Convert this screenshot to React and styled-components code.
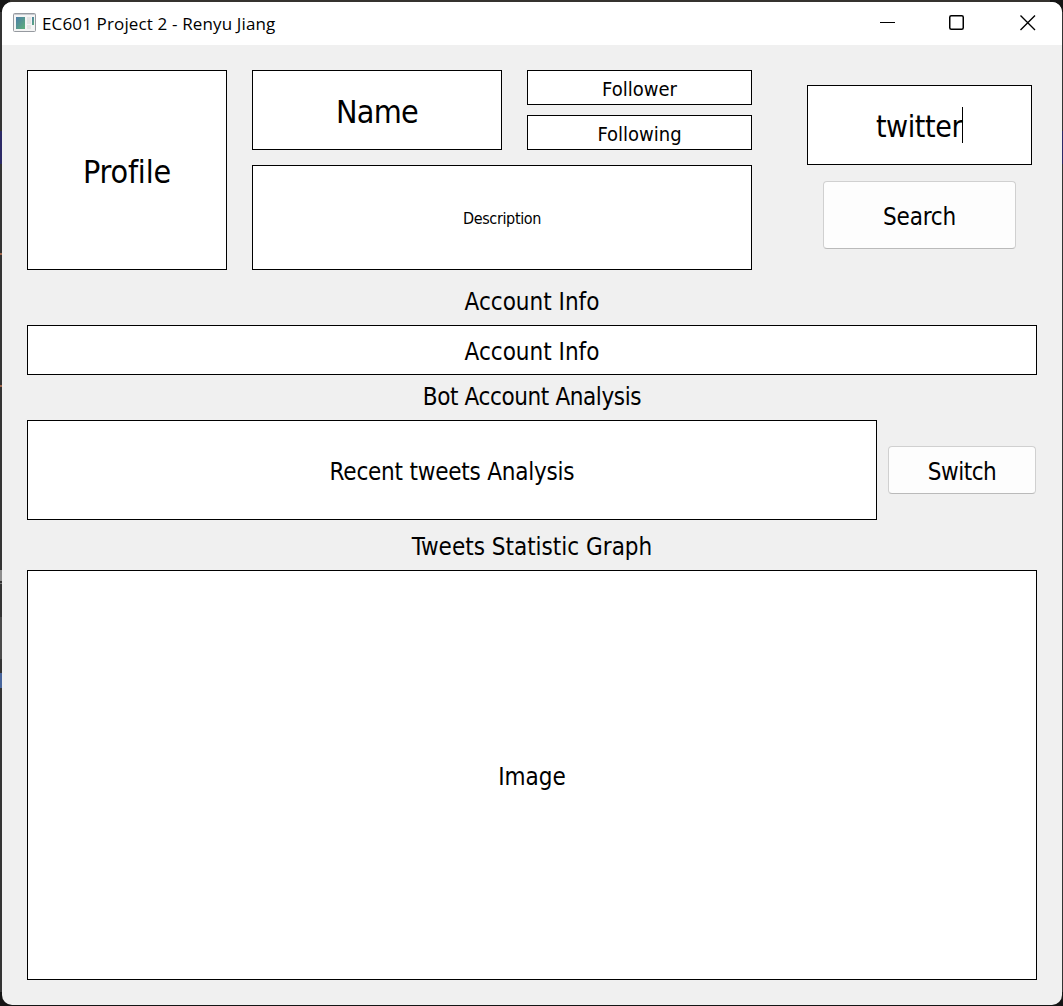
import React from "react";
import styled, { createGlobalStyle } from "styled-components";

const GlobalStyle = createGlobalStyle`
  *, *::before, *::after { box-sizing: border-box; }
  body { margin: 0; background: #262626; }
`;

const Desktop = styled.div`
  width: 1063px;
  height: 1006px;
  padding: 2px 1px 1px 2px;
  overflow: hidden;
  background:
    linear-gradient(#35322f, #35322f) 10px 0 / 1040px 2px no-repeat,
    linear-gradient(#2c2a66, #2c2a66) 0 131px / 1063px 33px no-repeat,
    linear-gradient(#a0674c, #a0674c) 0 253px / 2px 2px no-repeat,
    linear-gradient(#a0674c, #a0674c) 0 385px / 2px 2px no-repeat,
    linear-gradient(#8c8c8c, #8c8c8c) 0 570px / 2px 11px no-repeat,
    linear-gradient(#777, #777) 0 583px / 2px 1px no-repeat,
    linear-gradient(#4b4b4b, #4b4b4b) 0 617px / 2px 42px no-repeat,
    linear-gradient(#48659c, #48659c) 0 673px / 2px 15px no-repeat,
    linear-gradient(#343434, #343434) 0 12px / 1063px 980px no-repeat,
    #151515;
`;

const Window = styled.main`
  display: flex;
  flex-direction: column;
  width: 1060px;
  height: 1003px;
  border-radius: 10px;
  overflow: hidden;
  background: #f0f0f0;
  color: #000;
  font-family: "DejaVu Sans Condensed", "DejaVu Sans", sans-serif;
  font-stretch: condensed;
  font-variant-ligatures: none;
`;

const TitleBar = styled.header`
  display: flex;
  align-items: center;
  flex: none;
  height: 43px;
  padding-left: 11px;
  background: #fff;
`;

const Title = styled.h1`
  flex: 1;
  margin: 0 0 0 6px;
  padding-top: 1px;
  font: 400 17px/24px "Open Sans", "Noto Sans", sans-serif;
  letter-spacing: ${(p) => p.$spacing}px;
`;

const AppIcon = styled.svg`
  display: block;
  margin-top: -3px;
`;

const Controls = styled.div`
  display: flex;
`;

const ControlButton = styled.button`
  display: grid;
  place-items: center;
  width: 70px;
  height: 43px;
  padding: 0 0 2px ${(p) => p.$shift || 0}px;
  border: 0;
  background: transparent;
`;

const Client = styled.div`
  display: flex;
  flex-direction: column;
  padding: 25px 25px 0;
`;

const Header = styled.section`
  display: flex;
  height: 200px;
`;

const Details = styled.div`
  display: flex;
  flex-direction: column;
  gap: 15px;
  margin-left: 25px;
`;

const DetailsTop = styled.div`
  display: flex;
  gap: 25px;
`;

const Counts = styled.div`
  display: flex;
  flex-direction: column;
  gap: 10px;
`;

const SearchPanel = styled.form`
  display: flex;
  flex-direction: column;
  align-items: center;
  gap: 16px;
  margin-left: 55px;
  padding-top: 15px;
`;

const Box = styled.div`
  display: flex;
  align-items: center;
  justify-content: center;
  flex: none;
  width: ${(p) => p.$w}px;
  height: ${(p) => p.$h}px;
  padding-top: ${(p) => p.$drop || 0}px;
  border: 1px solid #000;
  background: #fff;
  font-size: ${(p) => p.$size || 24}px;
  letter-spacing: ${(p) => p.$spacing || 0}px;
  line-height: 1.2;
  white-space: pre;
`;

const Caret = styled.span`
  width: 1px;
  height: 36px;
  margin-top: -4px;
  background: #000;
`;

const PushButton = styled.button`
  width: ${(p) => p.$w}px;
  height: ${(p) => p.$h}px;
  padding: ${(p) => p.$drop || 0}px 0 0;
  border: 1px solid #d0d0d0;
  border-bottom-color: #bababa;
  border-radius: 4px;
  background: #fdfdfd;
  color: #000;
  font: inherit;
  font-size: 24px;
  line-height: 1.2;
  letter-spacing: ${(p) => p.$spacing || 0}px;
`;

const Heading = styled.h2`
  display: flex;
  align-items: center;
  justify-content: center;
  height: ${(p) => p.$h}px;
  margin: 0;
  padding-top: ${(p) => p.$drop || 0}px;
  font-size: 24px;
  font-weight: 400;
  line-height: 1.2;
  letter-spacing: ${(p) => p.$spacing || 0}px;
`;

const AnalysisRow = styled.section`
  display: flex;
  align-items: center;
  gap: 11px;
`;

function ProgramIcon() {
  return (
    <AppIcon width="23" height="19" viewBox="0 0 23 19">
      <defs>
        <linearGradient id="pane" x1="0" y1="0" x2="1" y2="1">
          <stop offset="0" stopColor="#4c7da9" />
          <stop offset="1" stopColor="#5fb078" />
        </linearGradient>
      </defs>
      <rect x=".5" y=".5" width="22" height="18" rx="1" fill="#f4f4f4" stroke="#969aa0" />
      <path d="M1 1.5h21" stroke="#c8cbd0" />
      <rect x="3" y="4" width="9" height="12" fill="url(#pane)" />
      <rect x="14" y="4" width="4" height="7" fill="#e4e4e4" />
      <rect x="14" y="12" width="4" height="4" fill="#e4e4e4" />
      <rect x="19" y="4" width="2" height="8" fill="url(#pane)" />
    </AppIcon>
  );
}

export default function App() {
  return (
    <>
      <GlobalStyle />
      <Desktop>
        <Window>
          <TitleBar>
            <ProgramIcon />
            <Title $spacing={0.14}>EC601 Project 2 - Renyu Jiang</Title>
            <Controls>
              <ControlButton aria-label="Minimize" $shift={2}>
                <svg width="16" height="16" fill="none" stroke="#000">
                  <path d="M0 7.5h15" />
                </svg>
              </ControlButton>
              <ControlButton aria-label="Maximize">
                <svg width="16" height="16" fill="none" stroke="#000" strokeWidth="1.5">
                  <rect x=".75" y=".75" width="13.5" height="13.5" rx="1.5" />
                </svg>
              </ControlButton>
              <ControlButton aria-label="Close" $shift={2}>
                <svg width="16" height="16" fill="none" stroke="#000" strokeWidth="1.4">
                  <path d="M.5.5l14.5 14.5M15 .5L.5 15" />
                </svg>
              </ControlButton>
            </Controls>
          </TitleBar>
          <Client>
            <Header>
              <Box $w={200} $h={200} $size={32} $drop={5} $spacing={-0.2}>Profile</Box>
              <Details>
                <DetailsTop>
                  <Box $w={250} $h={80} $size={32} $drop={5} $spacing={-0.7}>Name</Box>
                  <Counts>
                    <Box $w={225} $h={35} $size={20} $drop={2}>Follower</Box>
                    <Box $w={225} $h={35} $size={20} $drop={2}>Following</Box>
                  </Counts>
                </DetailsTop>
                <Box $w={500} $h={105} $size={16} $spacing={-0.35} $drop={2}>Description</Box>
              </Details>
              <SearchPanel onSubmit={(e) => e.preventDefault()}>
                <Box $w={225} $h={80} $size={30} $spacing={-0.4} $drop={4}>
                  twitter
                  <Caret />
                </Box>
                <PushButton $w={193} $h={68} $drop={4} $spacing={-0.2}>Search</PushButton>
              </SearchPanel>
            </Header>
            <Heading $h={55} $drop={10}>Account Info</Heading>
            <Box $w={1010} $h={50} $drop={4}>Account Info</Box>
            <Heading $h={45} $spacing={-0.4}>Bot Account Analysis</Heading>
            <AnalysisRow>
              <Box $w={850} $h={100} $drop={4} $spacing={-0.22}>Recent tweets Analysis</Box>
              <PushButton $w={148} $h={48} $drop={4} $spacing={-0.5}>Switch</PushButton>
            </AnalysisRow>
            <Heading $h={50} $drop={5}>Tweets Statistic Graph</Heading>
            <Box $w={1010} $h={410} $drop={4}>Image</Box>
          </Client>
        </Window>
      </Desktop>
    </>
  );
}
